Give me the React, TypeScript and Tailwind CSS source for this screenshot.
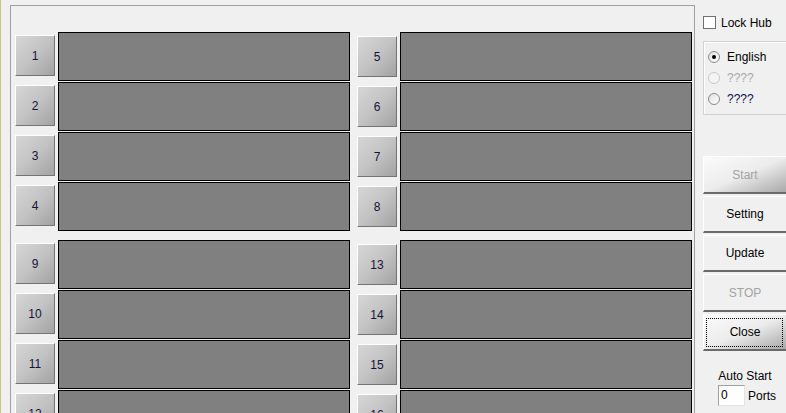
import React from "react";

const font = { fontFamily: '"Liberation Sans", Arial, sans-serif' };

function NumBtn({ n, right }: { n: number; right?: boolean }) {
  return (
    <div
      className={`w-[40px] h-[41px] shrink-0 ${right ? "mt-[4px]" : "mt-[3px]"} border-t border-l border-t-white border-l-white border-b border-r border-b-[#747474] border-r-[#747474] bg-linear-to-br from-[#d6d6d6] via-[#c3c3c3] to-[#a2a2a2] flex items-center justify-center text-[12px] text-[#14143a]`}
    >
      {n}
    </div>
  );
}

function Row({ a, b }: { a: number; b: number }) {
  return (
    <div className="flex h-[49px]">
      <NumBtn n={a} />
      <div className="ml-[3px] w-[292px] h-[49px] bg-[#808080] border border-black" />
      <div className="ml-[7px]">
        <NumBtn n={b} right />
      </div>
      <div className="ml-[3px] w-[292px] h-[49px] bg-[#808080] border border-black" />
    </div>
  );
}

function SideBtn({
  label,
  disabled,
  gradient,
  focus,
  tall,
}: {
  label: string;
  disabled?: boolean;
  gradient?: boolean;
  focus?: boolean;
  tall?: boolean;
}) {
  return (
    <div
      className={`relative w-[84px] ${tall ? "h-[38px]" : "h-[37px]"} shrink-0 border-t border-l border-t-[#ffffff] border-l-[#ffffff] border-b-2 border-b-[#6a6a6a] border-r border-r-[#6a6a6a] flex items-center justify-center text-[12px] ${
        gradient
          ? "bg-linear-to-br from-[#fbfbfb] via-[#ececec] to-[#a9a9a9]"
          : "bg-[#f0f0f0]"
      } ${disabled ? "text-[#a3a3a3]" : "text-black"}`}
    >
      {focus && (
        <div className="absolute left-[2px] top-[3px] right-[3px] bottom-[2px] border border-dotted border-black" />
      )}
      <span className="relative">{label}</span>
    </div>
  );
}

function Radio({
  label,
  checked,
  disabled,
  blue,
}: {
  label: string;
  checked?: boolean;
  disabled?: boolean;
  blue?: boolean;
}) {
  return (
    <div className="flex items-center h-[13px]">
      <div
        className={`w-[12px] h-[12px] rounded-full border ${
          disabled ? "border-[#c8c8c8] bg-[#f4f4f4]" : "border-[#8a8a8a] bg-linear-to-br from-[#e0e0e0] to-white"
        } flex items-center justify-center`}
      >
        {checked && <div className="w-[4px] h-[4px] rounded-full bg-black" />}
      </div>
      <span
        className={`ml-[7px] text-[12px] ${
          disabled ? "text-[#a8a8a8]" : blue ? "text-[#0c0c50]" : "text-black"
        }`}
      >
        {label}
      </span>
    </div>
  );
}

export default function App() {
  return (
    <div
      className="w-[786px] h-[413px] overflow-hidden bg-[#f0f0f0] border-l border-[#c8c884] flex"
      style={font}
    >
      <div className="ml-[9px] mt-[5px] w-[685px] h-[430px] shrink-0 border border-[#a0a0a0] pl-[4px] pt-[26px] flex flex-col">
        <div className="flex flex-col gap-[1px]">
          <Row a={1} b={5} />
          <Row a={2} b={6} />
          <Row a={3} b={7} />
          <Row a={4} b={8} />
        </div>
        <div className="mt-[9px] flex flex-col gap-[1px]">
          <Row a={9} b={13} />
          <Row a={10} b={14} />
          <Row a={11} b={15} />
          <Row a={12} b={16} />
        </div>
      </div>
      <div className="ml-[8px] w-[84px] shrink-0 flex flex-col">
        <div className="mt-[16px] flex items-center h-[13px]">
          <div className="w-[13px] h-[13px] border border-[#707070] bg-white" />
          <span className="ml-[5px] text-[12px] text-black">Lock Hub</span>
        </div>
        <div className="mt-[12px] w-[90px] h-[74px] border border-[#d2d2d2] shadow-[inset_1px_1px_0_#ffffff] pl-[4px] pt-[8px] flex flex-col gap-[8px]">
          <Radio label="English" checked />
          <Radio label="????" disabled />
          <Radio label="????" blue />
        </div>
        <div className="mt-[41px] flex flex-col gap-[2px]">
          <SideBtn label="Start" disabled gradient tall />
          <SideBtn label="Setting" />
          <SideBtn label="Update" />
          <SideBtn label="STOP" disabled tall />
          <SideBtn label="Close" gradient focus />
        </div>
        <div className="mt-[18px] text-center text-[12px] leading-[14px] text-black">Auto Start</div>
        <div className="mt-[2px] ml-[15px] flex items-center">
          <div className="w-[27px] h-[21px] border-t border-l border-t-[#a0a0a0] border-l-[#a0a0a0] border-b border-r border-b-[#e3e3e3] border-r-[#e3e3e3] bg-white text-[12px] pl-[2px] leading-[19px]">
            0
          </div>
          <span className="ml-[3px] text-[12px] text-black">Ports</span>
        </div>
      </div>
    </div>
  );
}
